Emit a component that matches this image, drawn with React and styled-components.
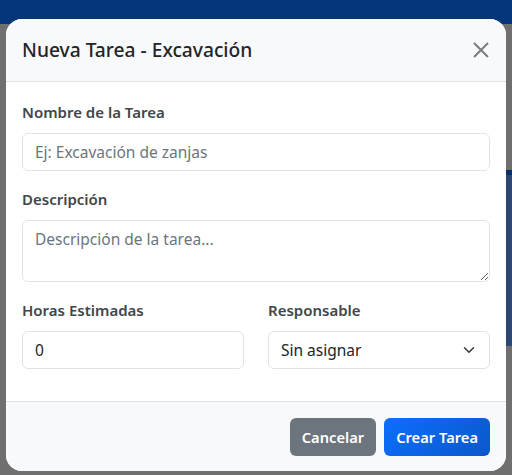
import React from "react";
import styled, { createGlobalStyle } from "styled-components";

const GlobalStyle = createGlobalStyle`
  html, body {
    margin: 0;
    padding: 0;
  }
  body {
    font-family: "Segoe UI", "Noto Sans", "Liberation Sans", sans-serif;
    background: #6f6f6f;
    color: #212529;
  }
  * {
    box-sizing: border-box;
  }
`;

const Page = styled.div`
  position: relative;
  width: 512px;
  height: 475px;
  overflow: hidden;
  background: #6f6f6f;
`;

const Navbar = styled.div`
  height: 24px;
  background: #06367a;
`;

const SideCard = styled.div`
  margin: 146px 0 0 auto;
  width: 40px;
  height: 176px;
  background: #2c4872;
  border-top: 5px solid #0b2f66;
`;

const Dialog = styled.div`
  position: absolute;
  top: 19px;
  left: 6px;
  width: 500px;
  background: #fff;
  border-radius: 16px;
  overflow: hidden;
  display: flex;
  flex-direction: column;
`;

const Header = styled.div`
  display: flex;
  align-items: center;
  justify-content: space-between;
  padding: 16px;
  background: #f8f9fa;
  border-bottom: 1px solid #dee2e6;
`;

const Title = styled.h5`
  margin: 0;
  font-size: 19.2px;
  line-height: 30px;
  font-weight: 500;
  color: #212529;
`;

const CloseButton = styled.button`
  border: 0;
  background: transparent;
  padding: 0;
  width: 18px;
  height: 18px;
  display: flex;
  align-items: center;
  justify-content: center;
  cursor: pointer;
  opacity: 0.5;
`;

const Body = styled.div`
  padding: 18px 16px 16px;
`;

const Field = styled.div`
  margin-bottom: 16px;
`;

const Row = styled.div`
  display: grid;
  grid-template-columns: 1fr 1fr;
  column-gap: 24px;
`;

const Label = styled.label`
  display: block;
  font-size: 15px;
  line-height: 24px;
  font-weight: 600;
  color: #41464b;
  margin-bottom: 9px;
`;

const controlBase = `
  display: block;
  width: 100%;
  font-family: inherit;
  font-size: 15.5px;
  line-height: 24px;
  color: #212529;
  background: #fff;
  border: 1px solid #dee2e6;
  border-radius: 6px;
  padding: 6px 12px;
  outline: none;
  &::placeholder {
    color: #6c757d;
  }
`;

const Input = styled.input`
  ${controlBase}
  height: 38px;
`;

const TextArea = styled.textarea`
  ${controlBase}
  height: 62px;
  resize: vertical;
`;

const Select = styled.select`
  ${controlBase}
  height: 38px;
  appearance: none;
  padding-right: 36px;
  background-image: url("data:image/svg+xml,%3csvg xmlns='http://www.w3.org/2000/svg' viewBox='0 0 16 16'%3e%3cpath fill='none' stroke='%23343a40' stroke-linecap='round' stroke-linejoin='round' stroke-width='2' d='m2 5 6 6 6-6'/%3e%3c/svg%3e");
  background-repeat: no-repeat;
  background-position: right 12px center;
  background-size: 16px 12px;
`;

const Footer = styled.div`
  display: flex;
  justify-content: flex-end;
  align-items: center;
  gap: 8px;
  padding: 16px 16px 15px;
  background: #f8f9fa;
  border-top: 1px solid #dee2e6;
`;

const Button = styled.button`
  font-family: inherit;
  font-size: 14.7px;
  line-height: 24px;
  font-weight: 600;
  color: #fff;
  border: 0;
  border-radius: 6px;
  padding: 7px 12px;
  cursor: pointer;
  background: ${(p) =>
    p.$primary ? "linear-gradient(135deg, #0d6efd 0%, #0a58ca 100%)" : "#6c757d"};
`;

export default function App() {
  return (
    <>
      <GlobalStyle />
      <Page>
        <Navbar />
        <SideCard />
        <Dialog>
          <Header>
            <Title>Nueva Tarea - Excavación</Title>
            <CloseButton aria-label="Cerrar">
              <svg width="16" height="16" viewBox="0 0 16 16">
                <path
                  d="M1 1 15 15M15 1 1 15"
                  stroke="#000"
                  strokeWidth="2"
                  fill="none"
                />
              </svg>
            </CloseButton>
          </Header>
          <Body>
            <Field>
              <Label>Nombre de la Tarea</Label>
              <Input placeholder="Ej: Excavación de zanjas" />
            </Field>
            <Field>
              <Label>Descripción</Label>
              <TextArea placeholder="Descripción de la tarea..." />
            </Field>
            <Row>
              <Field>
                <Label>Horas Estimadas</Label>
                <Input type="number" defaultValue="0" />
              </Field>
              <Field>
                <Label>Responsable</Label>
                <Select defaultValue="">
                  <option value="">Sin asignar</option>
                </Select>
              </Field>
            </Row>
          </Body>
          <Footer>
            <Button>Cancelar</Button>
            <Button $primary>Crear Tarea</Button>
          </Footer>
        </Dialog>
      </Page>
    </>
  );
}
